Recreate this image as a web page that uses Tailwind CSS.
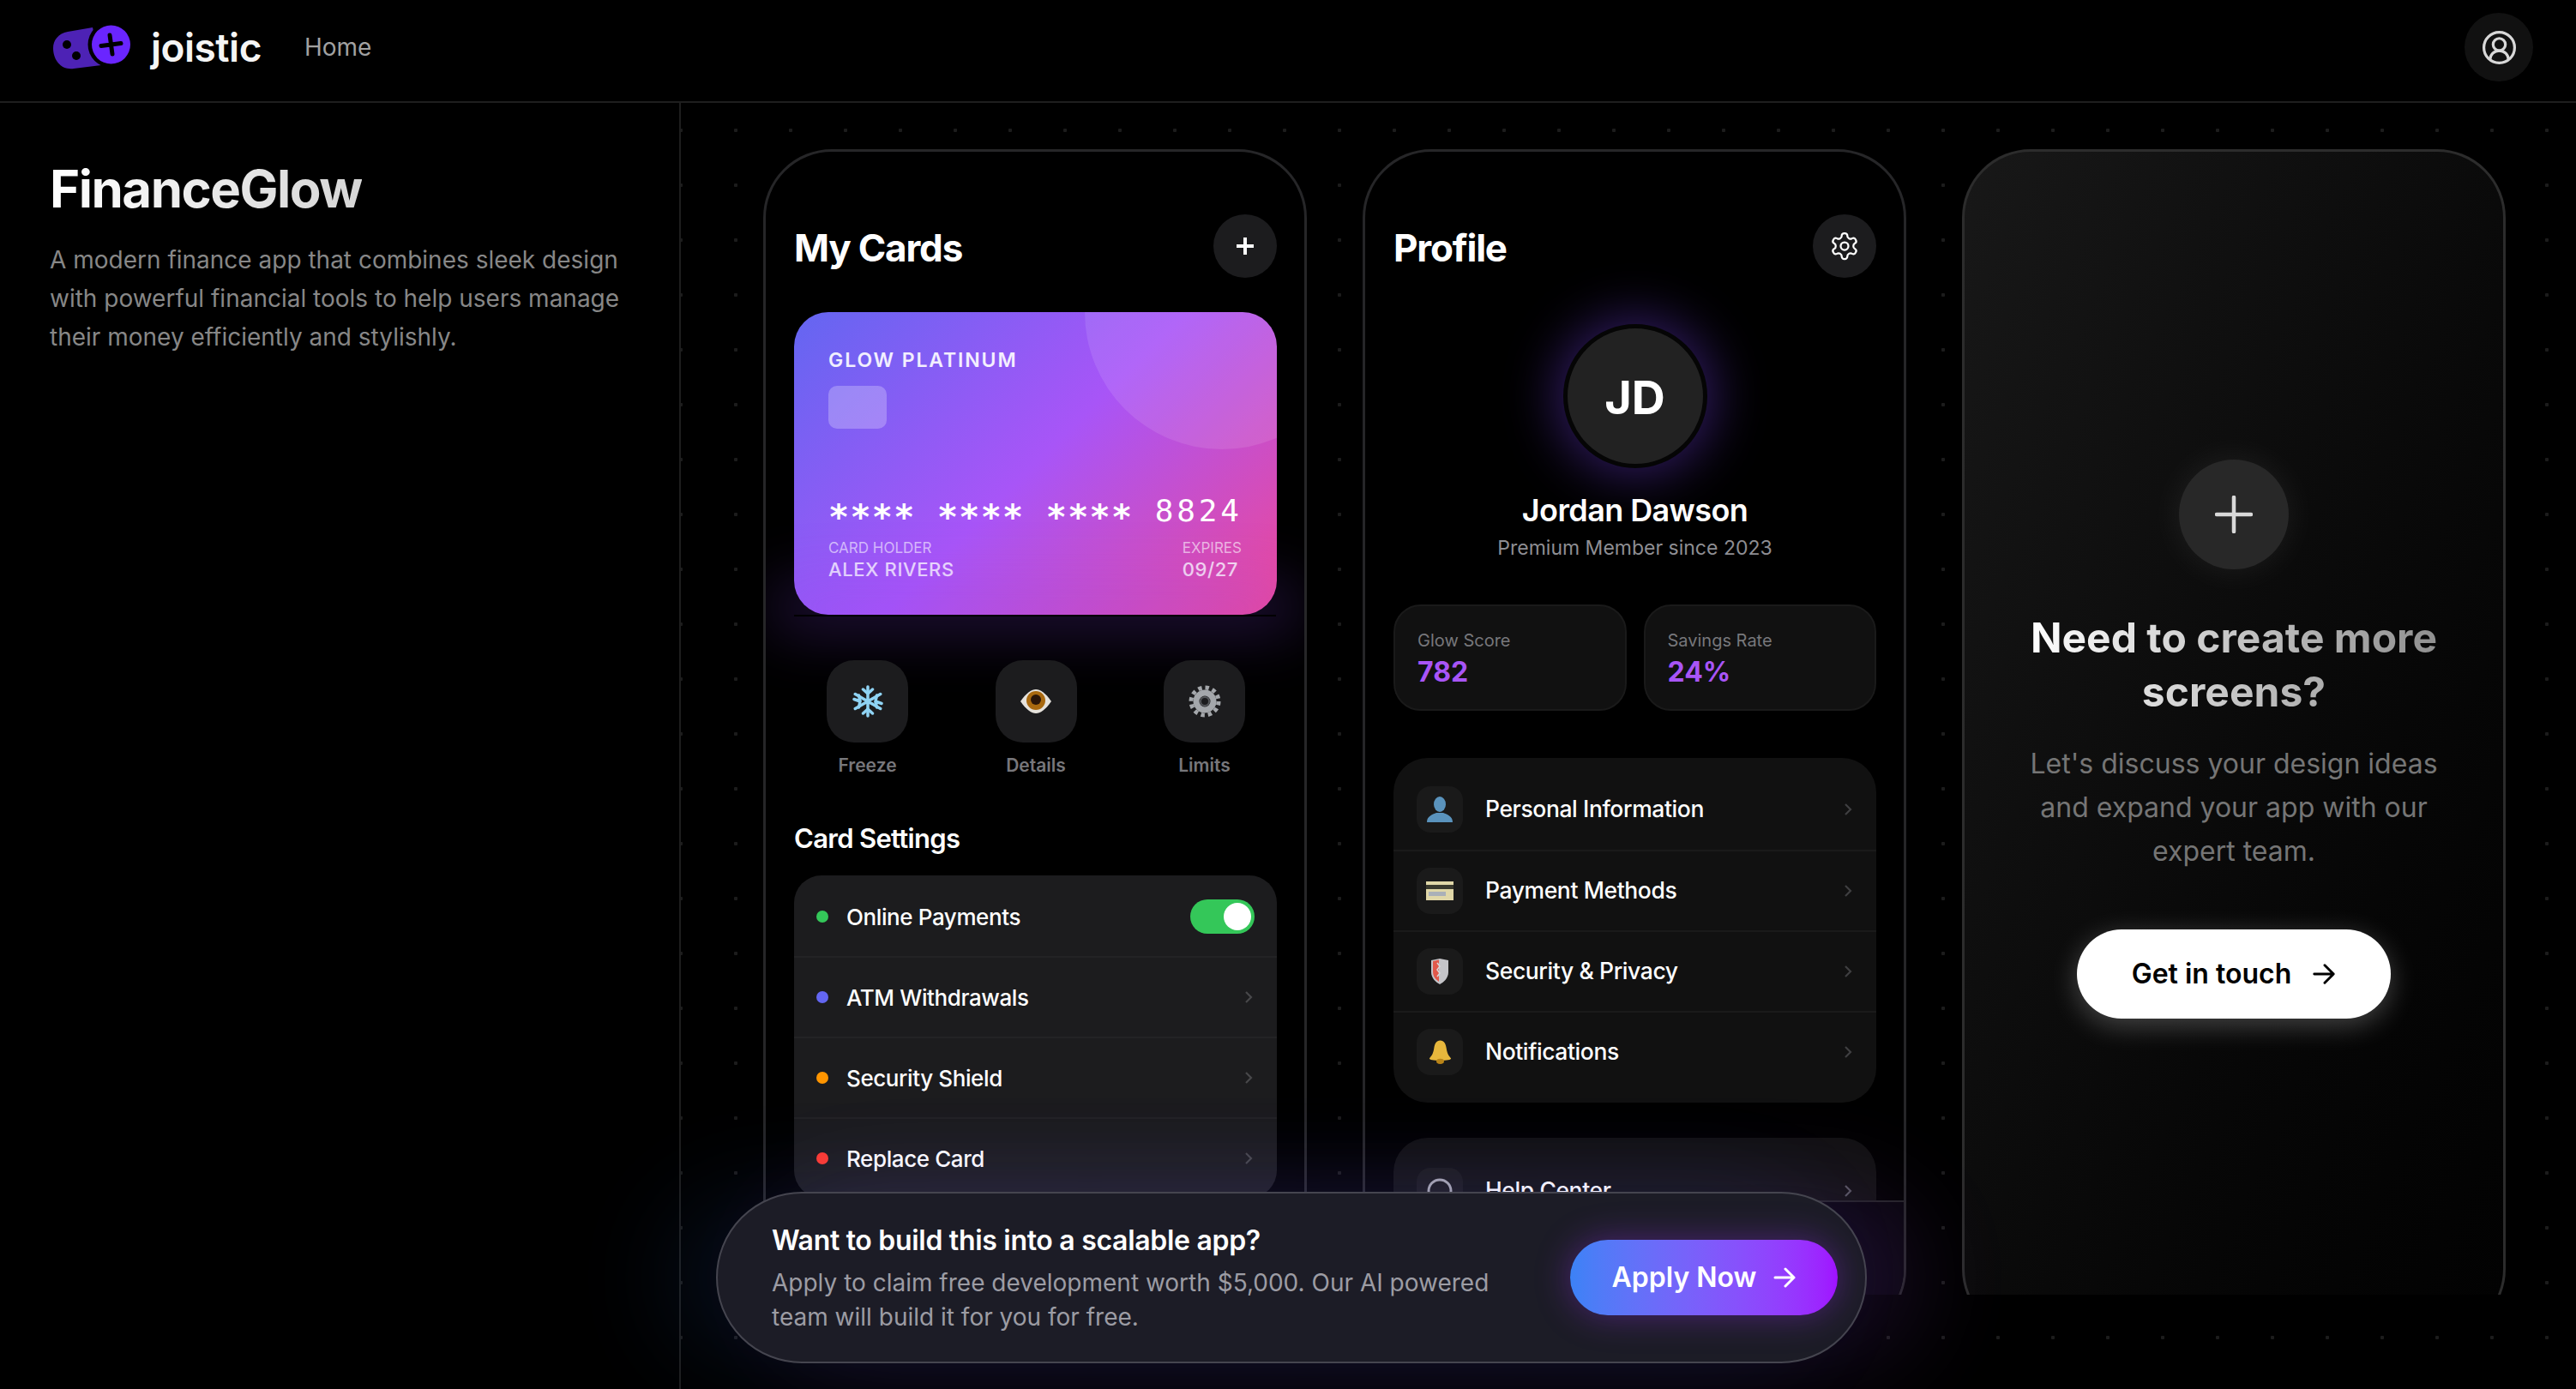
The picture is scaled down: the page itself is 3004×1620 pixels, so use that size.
<!DOCTYPE html>
<html lang="en">
<head>
    <meta charset="UTF-8">
    <title>FinanceGlow</title>
    <script src="https://cdn.jsdelivr.net/npm/@tailwindcss/browser@4"></script>
</head>
<body class="bg-black text-white font-[Inter,sans-serif] w-[3004px] h-[1620px] overflow-hidden flex flex-col">
    <!-- Top bar -->
    <header class="h-[120px] shrink-0 border-b-2 border-[#1e1e1e] flex items-center pl-[60px] pr-[50px] pb-[8px]">
        <svg class="w-[94px] h-[56px]" viewBox="0 0 94 56">
            <path d="M48 5L19 10C8 12 2 20 2 29C2 44 12 55 26 53L58 49Z" fill="#4d22b5"/>
            <circle cx="18" cy="25" r="5" fill="#000"/>
            <circle cx="29" cy="38" r="5" fill="#000"/>
            <circle cx="69.5" cy="25" r="27" fill="#000"/>
            <circle cx="69.5" cy="25" r="22.5" fill="#6a25ff"/>
            <path d="M58 26.500L81 23.500M68 14L71 36" stroke="#000" stroke-width="5" stroke-linecap="round"/>
        </svg>
        <span class="ml-[22px] text-[46px] leading-[56px] font-semibold tracking-[-0.5px] text-[#f5f5f5]">joistic</span>
        <span class="ml-[50px] text-[28px] leading-[36px] text-[#a1a1a1]">Home</span>
        <button class="ml-auto w-[80px] h-[80px] rounded-full bg-[#111111] flex items-center justify-center">
            <svg class="w-[43px] h-[43px]" viewBox="0 0 24 24" fill="none" stroke="#d8d8d8" stroke-width="1.800">
                <path d="M18 20a6 6 0 0 0-12 0"/><circle cx="12" cy="10" r="4"/><circle cx="12" cy="12" r="10"/>
            </svg>
        </button>
    </header>

    <main class="flex flex-1 min-h-0">
        <!-- Sidebar -->
        <aside class="w-[794px] shrink-0 border-r-2 border-[#1e1e1e] pl-[58px] pr-[60px] pt-[64px]">
            <h1 class="text-[60px] leading-[72px] font-bold tracking-[-1.5px] w-fit bg-linear-to-r from-white to-[#d6d6d6] bg-clip-text text-transparent">FinanceGlow</h1>
            <p class="mt-[25px] text-[28px] leading-[45px] text-[#878787]">A modern finance app that combines sleek design with powerful financial tools to help users manage their money efficiently and stylishly.</p>
        </aside>

        <!-- Canvas with the phones -->
        <section class="relative flex-1 bg-[radial-gradient(circle,#1c1c1c_2px,transparent_2.500px)] [background-size:64px_64px] [background-position:-32px_0px]">
            <div class="h-[1390px] overflow-hidden pt-[54px] pl-[96px] flex gap-[65px]">

                <!-- My Cards -->
                <div class="relative w-[634px] h-[1386px] shrink-0 rounded-[80px] border-[3px] border-[#262628] bg-black pl-[33px] pr-[32px] pt-[73px] overflow-hidden">
                    <div class="flex items-center justify-between h-[74px]">
                        <h2 class="text-[44px] font-bold tracking-[-1.2px] pt-[3px]">My Cards</h2>
                        <button class="w-[74px] h-[74px] rounded-full bg-[#1c1c1e] flex items-center justify-center">
                            <svg class="w-[24px] h-[24px]" viewBox="0 0 24 24" stroke="#fff" stroke-width="4"><path d="M12 2v20M2 12h20"/></svg>
                        </button>
                    </div>

                    <div class="relative mt-[40px] h-[353px] rounded-[40px] overflow-hidden bg-[linear-gradient(135deg,#6366f1_0%,#a855f7_50%,#ec4899_100%)] pl-[40px] pr-[41px] pt-[42px]">
                        <div class="absolute w-[320px] h-[320px] rounded-full bg-white/10 top-[-160px] right-[-96px]"></div>
                        <div class="text-[23px] leading-[28px] font-semibold tracking-[1.900px] text-white/90">GLOW PLATINUM</div>
                        <div class="mt-[16px] w-[68px] h-[50px] rounded-[10px] bg-white/25"></div>
                        <div class="mt-[72px] h-[44px] leading-[44px] whitespace-pre font-['DejaVu_Sans_Mono',monospace]"><span class="relative top-[9px] text-[40px] font-bold tracking-[1.300px]">**** **** **** </span><span class="text-[36px] tracking-[3.800px]">8824</span></div>
                        <div class="mt-[12px] flex justify-between">
                            <div>
                                <div class="text-[17px] leading-[22px] text-white/60">CARD HOLDER</div>
                                <div class="text-[22px] leading-[28px] font-medium tracking-[0.600px] text-white/80">ALEX RIVERS</div>
                            </div>
                            <div>
                                <div class="text-[17px] leading-[22px] text-white/60">EXPIRES</div>
                                <div class="text-[22px] leading-[28px] font-medium tracking-[0.600px] text-white/80">09/27</div>
                            </div>
                        </div>
                    </div>
                    <div class="absolute left-[33px] right-[33px] top-[540px] h-[2px] shadow-[0_-10px_70px_24px_rgba(139,72,246,0.28)]"></div>

                    <div class="relative mt-[53px] flex justify-between pl-[38px] pr-[37px]">
                        <div class="w-[95px] flex flex-col items-center">
                            <div class="w-[95px] h-[96px] rounded-[32px] bg-[#1c1c1e] flex items-center justify-center">
                                <svg class="w-[38px] h-[38px]" viewBox="0 0 38 38" fill="none" stroke="#8fd3f4" stroke-width="3.500" stroke-linecap="round">
                                    <path d="M19 2v34M4.300 10.500l29.400 17M4.300 27.500l29.400-17"/>
                                    <path d="M13.500 5l5.500 5 5.500-5M13.500 33l5.500-5 5.500 5"/>
                                    <path d="M3 16.500l7 2.500-1.500 7M35 21.500l-7-2.500 1.500-7M8.500 12l1.500 7M29.500 26l-1.500-7"/>
                                </svg>
                            </div>
                            <span class="mt-[12px] text-[21px] leading-[30px] font-semibold text-[#77777b]">Freeze</span>
                        </div>
                        <div class="w-[95px] flex flex-col items-center">
                            <div class="w-[95px] h-[96px] rounded-[32px] bg-[#1c1c1e] flex items-center justify-center">
                                <svg class="w-[38px] h-[38px]" viewBox="0 0 38 38">
                                    <path d="M1 19C8 9 14 5 19 5C24 5 30 9 37 19C30 29 24 33 19 33C14 33 8 29 1 19Z" fill="#e6e2dc"/>
                                    <circle cx="19" cy="18" r="11" fill="#a9690f"/>
                                    <circle cx="19" cy="17" r="6" fill="#2a1508"/>
                                </svg>
                            </div>
                            <span class="mt-[12px] text-[21px] leading-[30px] font-semibold text-[#77777b]">Details</span>
                        </div>
                        <div class="w-[95px] flex flex-col items-center">
                            <div class="w-[95px] h-[96px] rounded-[32px] bg-[#1c1c1e] flex items-center justify-center">
                                <svg class="w-[38px] h-[38px]" viewBox="0 0 38 38" fill="none">
                                    <circle cx="19" cy="19" r="16" stroke="#a4a7ab" stroke-width="5" stroke-dasharray="4.400 3.980"/>
                                    <circle cx="19" cy="19" r="10" stroke="#a4a7ab" stroke-width="7"/>
                                    <circle cx="19" cy="19" r="5" stroke="#55575b" stroke-width="2"/>
                                </svg>
                            </div>
                            <span class="mt-[12px] text-[21px] leading-[30px] font-semibold text-[#77777b]">Limits</span>
                        </div>
                    </div>

                    <h3 class="relative mt-[50px] text-[31px] leading-[40px] font-semibold tracking-[-0.7px]">Card Settings</h3>

                    <div class="relative mt-[23px] rounded-[32px] bg-[#1c1c1e] overflow-hidden">
                        <div class="h-[94px] pt-[2px] flex items-center pl-[26px] pr-[26px]">
                            <span class="w-[14px] h-[14px] rounded-full bg-[#34c759]"></span>
                            <span class="ml-[21px] text-[26px] font-medium tracking-[-0.400px]">Online Payments</span>
                            <span class="ml-auto w-[75px] h-[40px] rounded-full bg-[#34c759] p-[4px] flex justify-end"><span class="w-[32px] h-[32px] rounded-full bg-white"></span></span>
                        </div>
                        <div class="h-[94px] border-t-2 border-[#232325] flex items-center pl-[26px] pr-[28px]">
                            <span class="w-[14px] h-[14px] rounded-full bg-[#6366f1]"></span>
                            <span class="ml-[21px] text-[26px] font-medium tracking-[-0.400px]">ATM Withdrawals</span>
                            <svg class="ml-auto w-[10px] h-[16px]" viewBox="0 0 10 16" fill="none" stroke="#48484a" stroke-width="2.200"><path d="M2 2l6 6-6 6"/></svg>
                        </div>
                        <div class="h-[94px] border-t-2 border-[#232325] flex items-center pl-[26px] pr-[28px]">
                            <span class="w-[14px] h-[14px] rounded-full bg-[#ff9500]"></span>
                            <span class="ml-[21px] text-[26px] font-medium tracking-[-0.400px]">Security Shield</span>
                            <svg class="ml-auto w-[10px] h-[16px]" viewBox="0 0 10 16" fill="none" stroke="#48484a" stroke-width="2.200"><path d="M2 2l6 6-6 6"/></svg>
                        </div>
                        <div class="h-[94px] border-t-2 border-[#232325] flex items-center pl-[26px] pr-[28px]">
                            <span class="w-[14px] h-[14px] rounded-full bg-[#ff3b30]"></span>
                            <span class="ml-[21px] text-[26px] font-medium tracking-[-0.400px]">Replace Card</span>
                            <svg class="ml-auto w-[10px] h-[16px]" viewBox="0 0 10 16" fill="none" stroke="#48484a" stroke-width="2.200"><path d="M2 2l6 6-6 6"/></svg>
                        </div>
                    </div>
                </div>

                <!-- Profile -->
                <div class="relative w-[634px] h-[1386px] shrink-0 rounded-[80px] border-[3px] border-[#262628] bg-black pl-[33px] pr-[32px] pt-[73px] overflow-hidden">
                    <div class="flex items-center justify-between h-[74px]">
                        <h2 class="text-[44px] font-bold tracking-[-1.2px] pt-[3px]">Profile</h2>
                        <button class="w-[74px] h-[74px] rounded-full bg-[#1c1c1e] flex items-center justify-center">
                            <svg class="w-[36px] h-[36px]" viewBox="0 0 24 24" fill="none" stroke="#fff" stroke-width="1.500" stroke-linejoin="round">
                                <path d="M12.220 2h-.44a2 2 0 0 0-2 2v.18a2 2 0 0 1-1 1.730l-.43.25a2 2 0 0 1-2 0l-.15-.08a2 2 0 0 0-2.730.73l-.22.38a2 2 0 0 0 .73 2.730l.15.1a2 2 0 0 1 1 1.720v.51a2 2 0 0 1-1 1.740l-.15.09a2 2 0 0 0-.73 2.730l.22.38a2 2 0 0 0 2.730.73l.15-.08a2 2 0 0 1 2 0l.43.25a2 2 0 0 1 1 1.730V20a2 2 0 0 0 2 2h.44a2 2 0 0 0 2-2v-.18a2 2 0 0 1 1-1.730l.43-.25a2 2 0 0 1 2 0l.15.08a2 2 0 0 0 2.730-.73l.22-.39a2 2 0 0 0-.73-2.730l-.15-.08a2 2 0 0 1-1-1.740v-.5a2 2 0 0 1 1-1.740l.15-.09a2 2 0 0 0 .73-2.730l-.22-.38a2 2 0 0 0-2.730-.73l-.15.08a2 2 0 0 1-2 0l-.43-.25a2 2 0 0 1-1-1.730V4a2 2 0 0 0-2-2z"/>
                                <circle cx="12" cy="12" r="3"/>
                            </svg>
                        </button>
                    </div>

                    <div class="mt-[54px] flex flex-col items-center">
                        <div class="w-[168px] h-[168px] rounded-full bg-[#222222] border-[5px] border-[#050505] shadow-[0_0_60px_8px_rgba(109,60,220,0.45)] flex items-center justify-center text-[54px] font-bold pt-[3px]">JD</div>
                        <div class="mt-[27px] text-[36px] leading-[44px] font-semibold tracking-[-0.6px]">Jordan Dawson</div>
                        <div class="mt-[6px] text-[23px] leading-[32px] text-[#8e8e93]">Premium Member since 2023</div>
                    </div>

                    <div class="mt-[50px] grid grid-cols-2 gap-[20px]">
                        <div class="h-[124px] rounded-[32px] bg-[#111111] border-2 border-[#1a1a1a] pl-[26px] pt-[26px]">
                            <div class="text-[20px] leading-[28px] text-[#77777b]">Glow Score</div>
                            <div class="mt-[3px] text-[32px] leading-[40px] font-bold text-[#a855f7]">782</div>
                        </div>
                        <div class="h-[124px] rounded-[32px] bg-[#111111] border-2 border-[#1a1a1a] pl-[26px] pt-[26px]">
                            <div class="text-[20px] leading-[28px] text-[#77777b]">Savings Rate</div>
                            <div class="mt-[3px] text-[32px] leading-[40px] font-bold text-[#a855f7]">24%</div>
                        </div>
                    </div>

                    <div class="mt-[55px] rounded-[40px] bg-[#111111] py-[13px]">
                        <div class="h-[94px] flex items-center pl-[27px] pr-[28px]">
                            <div class="w-[54px] h-[54px] rounded-[16px] bg-[#1a1a1a] flex items-center justify-center">
                                <svg class="w-[32px] h-[32px]" viewBox="0 0 32 32" fill="#5a93bd"><ellipse cx="16" cy="10" rx="7" ry="9"/><path d="M1 31C1 24 7 22 12 20H20C25 22 31 24 31 31Z"/></svg>
                            </div>
                            <span class="ml-[26px] text-[26.500px] font-medium tracking-[-0.400px]">Personal Information</span>
                            <svg class="ml-auto w-[10px] h-[16px]" viewBox="0 0 10 16" fill="none" stroke="#3f3f41" stroke-width="2.200"><path d="M2 2l6 6-6 6"/></svg>
                        </div>
                        <div class="h-[94px] border-t-2 border-[#1a1a1a] flex items-center pl-[27px] pr-[28px]">
                            <div class="w-[54px] h-[54px] rounded-[16px] bg-[#1a1a1a] flex items-center justify-center">
                                <svg class="w-[32px] h-[22px]" viewBox="0 0 32 22"><rect width="32" height="22" fill="#e0d7a8"/><rect y="4" width="32" height="5" fill="#3a3a2e"/><rect x="3" y="12" width="20" height="5" fill="#aab0b8"/></svg>
                            </div>
                            <span class="ml-[26px] text-[26.500px] font-medium tracking-[-0.400px]">Payment Methods</span>
                            <svg class="ml-auto w-[10px] h-[16px]" viewBox="0 0 10 16" fill="none" stroke="#3f3f41" stroke-width="2.200"><path d="M2 2l6 6-6 6"/></svg>
                        </div>
                        <div class="h-[94px] border-t-2 border-[#1a1a1a] flex items-center pl-[27px] pr-[28px]">
                            <div class="w-[54px] h-[54px] rounded-[16px] bg-[#1a1a1a] flex items-center justify-center">
                                <svg class="w-[22px] h-[32px]" viewBox="0 0 22 32"><path d="M1 3L11 1L21 3V17C21 24 15 29 11 31C7 29 1 24 1 17Z" fill="#c4c4c8"/><path d="M3 4L10 2.500V28C6 25 3 22 3 16Z" fill="#e2584a"/><path d="M8 6l3 4-3 4 3 4-3 4" fill="none" stroke="#d8d8d8" stroke-width="1.500"/></svg>
                            </div>
                            <span class="ml-[26px] text-[26.500px] font-medium tracking-[-0.400px]">Security &amp; Privacy</span>
                            <svg class="ml-auto w-[10px] h-[16px]" viewBox="0 0 10 16" fill="none" stroke="#3f3f41" stroke-width="2.200"><path d="M2 2l6 6-6 6"/></svg>
                        </div>
                        <div class="h-[94px] border-t-2 border-[#1a1a1a] flex items-center pl-[27px] pr-[28px]">
                            <div class="w-[54px] h-[54px] rounded-[16px] bg-[#1a1a1a] flex items-center justify-center">
                                <svg class="w-[27px] h-[30px]" viewBox="0 0 30 32"><path d="M15 1C20 1 22 5 23 11C24 18 26 21 29 24C29 26 24 27 15 27C6 27 1 26 1 24C4 21 6 18 7 11C8 5 10 1 15 1Z" fill="#e7b73c"/><ellipse cx="15" cy="28" rx="5" ry="3.500" fill="#b98418"/></svg>
                            </div>
                            <span class="ml-[26px] text-[26.500px] font-medium tracking-[-0.400px]">Notifications</span>
                            <svg class="ml-auto w-[10px] h-[16px]" viewBox="0 0 10 16" fill="none" stroke="#3f3f41" stroke-width="2.200"><path d="M2 2l6 6-6 6"/></svg>
                        </div>
                    </div>

                    <div class="mt-[41px] rounded-[40px] bg-[#111111] pt-[15px] pb-[12px]">
                        <div class="h-[94px] flex items-center pl-[27px] pr-[28px]">
                            <div class="w-[54px] h-[54px] rounded-[16px] bg-[#1a1a1a] flex items-center justify-center">
                                <svg class="w-[30px] h-[32px]" viewBox="0 0 30 32" fill="none" stroke="#a7a7ad" stroke-width="3"><circle cx="15" cy="16" r="13"/></svg>
                            </div>
                            <span class="ml-[26px] text-[26.500px] font-medium tracking-[-0.400px]">Help Center</span>
                            <svg class="ml-auto w-[10px] h-[16px]" viewBox="0 0 10 16" fill="none" stroke="#55555c" stroke-width="2.200"><path d="M2 2l6 6-6 6"/></svg>
                        </div>
                    </div>
                    <div class="absolute inset-x-0 top-[1223px] bottom-0 border-t-2 border-[#232325] bg-[#07050b]"></div>
                </div>

                <!-- Call to action screen -->
                <div class="w-[634px] h-[1386px] shrink-0 rounded-[80px] border-[3px] border-[#2c2c2c] bg-linear-to-br from-[#181818] to-[#020202] pt-[359px] flex flex-col items-center">
                    <div class="w-[128px] h-[128px] rounded-full bg-[#282828] shadow-[0_0_40px_rgba(255,255,255,0.08)] flex items-center justify-center">
                        <svg class="w-[44px] h-[44px]" viewBox="0 0 44 44" stroke="#d9d9d9" stroke-width="4.500" stroke-linecap="round"><path d="M22 2v40M2 22h40"/></svg>
                    </div>
                    <h2 class="mt-[48px] w-[480px] text-center text-[48px] leading-[63px] font-bold bg-linear-to-r from-white to-[#8f8f8f] bg-clip-text text-transparent">Need to create more screens?</h2>
                    <p class="mt-[27px] w-[500px] text-center text-[32px] leading-[51px] text-[#757575]">Let's discuss your design ideas and expand your app with our expert team.</p>
                    <button class="mt-[66px] w-[366px] h-[104px] rounded-full bg-white text-black text-[32px] font-semibold shadow-[0_8px_32px_rgba(255,255,255,0.25)] flex items-center justify-center gap-[24px]">
                        Get in touch
                        <svg class="w-[28px] h-[28px]" viewBox="0 0 30 30" fill="none" stroke="#000" stroke-width="3.200" stroke-linecap="round" stroke-linejoin="round"><path d="M3 15h24M16 4l11 11-11 11"/></svg>
                    </button>
                </div>
            </div>

            <!-- Floating banner -->
            <div class="absolute left-[41px] bottom-[30px] w-[1342px] h-[200px] rounded-full border-2 border-[#45454f] bg-[#1c1c26] shadow-[-60px_0_120px_rgba(59,130,246,0.10),60px_0_120px_rgba(168,85,247,0.14)] pl-[63px] pr-[32px] flex items-center justify-between">
                <div class="pt-[3px]">
                    <div class="text-[32px] leading-[40px] font-semibold tracking-[-0.3px]">Want to build this into a scalable app?</div>
                    <div class="mt-[9px] w-[880px] text-[28px] leading-[40px] text-[#9c9ca4]">Apply to claim free development worth $5,000. Our AI powered team will build it for you for free.</div>
                </div>
                <button class="w-[312px] h-[88px] rounded-full bg-linear-to-r from-[#3b82f6] to-[#a011ff] shadow-[0_0_40px_rgba(147,51,234,0.4)] text-[32px] font-semibold flex items-center justify-center gap-[20px]">
                    Apply Now
                    <svg class="w-[26px] h-[26px]" viewBox="0 0 26 26" fill="none" stroke="#fff" stroke-width="3" stroke-linecap="round" stroke-linejoin="round"><path d="M2 13h22M14 3l10 10-10 10"/></svg>
                </button>
            </div>
        </section>
    </main>
</body>
</html>
